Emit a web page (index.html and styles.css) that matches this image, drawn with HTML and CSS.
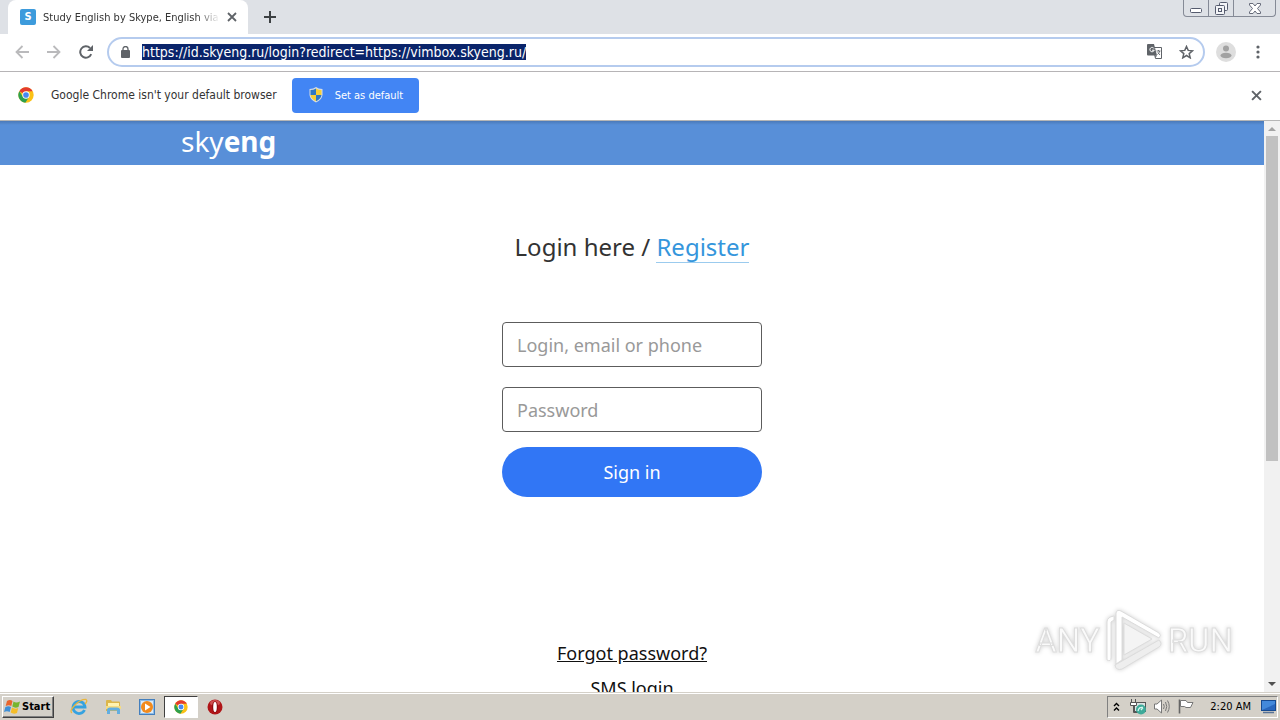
FILE: index.html
```html
<!DOCTYPE html>
<html lang="en">
<head>
    <meta charset="UTF-8">
    <meta name="viewport" content="width=device-width, initial-scale=1.0">
    <title>Study English by Skype, English via Skype</title>
    <link rel="stylesheet" href="styles.css">
</head>
<body>
    <!-- Shared icons -->
    <svg class="sprite" aria-hidden="true">
        <symbol id="chrome" viewBox="0 0 48 48">
            <circle cx="24" cy="24" r="23" fill="#fbc116"/>
            <path d="M24 24 4.100 12.500A23 23 0 0 1 43.900 12.500L24 13Z" fill="#e33b2e"/>
            <path d="M4.100 12.500A23 23 0 0 0 22 47L33.500 29.500 24 34 14.500 29.500Z" fill="#2da04e"/>
            <circle cx="24" cy="24" r="11" fill="#fff"/>
            <circle cx="24" cy="24" r="8.500" fill="#4688f1"/>
        </symbol>
        <symbol id="cross" viewBox="0 0 10 10">
            <path d="M1 1 9 9M9 1 1 9" fill="none" stroke="currentColor" stroke-width="1.800"/>
        </symbol>
    </svg>

    <div class="desktop">
        <!-- Tab strip -->
        <div class="tab-strip">
            <div class="tab">
                <span class="favicon">S</span>
                <span class="tab-title">Study English by Skype, English via S</span>
                <button class="icon-btn" aria-label="Close tab"><svg width="10" height="10"><use href="#cross"/></svg></button>
            </div>
            <button class="icon-btn new-tab" aria-label="New tab">
                <svg width="12" height="12" viewBox="0 0 12 12"><path d="M6 0V12M0 6H12" stroke="#3c4043" stroke-width="2"/></svg>
            </button>
            <div class="window-controls">
                <button class="window-btn" aria-label="Minimize">
                    <svg width="12" height="5" viewBox="0 0 12 5"><rect x=".5" y=".5" width="11" height="4" rx="1" fill="#fff" stroke="#555b6e"/></svg>
                </button>
                <button class="window-btn" aria-label="Restore">
                    <svg width="13" height="13" viewBox="0 0 13 13" fill="#f3f4f7" stroke="#555b6e"><rect x="4.500" y=".5" width="8" height="8" rx="1"/><rect x=".5" y="3.500" width="9" height="9" rx="1"/><rect x="3.500" y="6.500" width="3" height="3"/></svg>
                </button>
                <button class="window-btn window-close" aria-label="Close">
                    <svg width="12" height="11" viewBox="0 0 12 11"><path d="M.5.5H4L6 3 8 .5H11.500V2L8.500 5.500 11.500 9V10.500H8L6 8 4 10.500H.5V9L3.500 5.500.5 2Z" fill="#fff" stroke="#666b7a"/></svg>
                </button>
            </div>
        </div>

        <!-- Toolbar -->
        <div class="toolbar">
            <button class="icon-btn nav-btn disabled" aria-label="Back">
                <svg width="14" height="14" viewBox="0 0 14 14" fill="none" stroke="currentColor" stroke-width="1.800"><path d="M14 7H1.500M7.500 1 1.500 7 7.500 13"/></svg>
            </button>
            <button class="icon-btn nav-btn disabled" aria-label="Forward">
                <svg width="14" height="14" viewBox="0 0 14 14" fill="none" stroke="currentColor" stroke-width="1.800"><path d="M0 7H12.500M6.500 1 12.500 7 6.500 13"/></svg>
            </button>
            <button class="icon-btn nav-btn" aria-label="Reload">
                <svg width="14" height="14" viewBox="0 0 14 14"><path d="M12.200 9.200A5.700 5.700 0 1 1 11 3" fill="none" stroke="currentColor" stroke-width="2"/><path d="M14 0V6H8Z" fill="currentColor"/></svg>
            </button>
            <div class="address-bar">
                <svg class="lock" width="9" height="12" viewBox="0 0 9 12"><rect y="4" width="9" height="8" rx="1" fill="#5f6368"/><path d="M2 5V3a2.500 2.500 0 0 1 5 0V5" fill="none" stroke="#5f6368" stroke-width="1.300"/></svg>
                <input class="address-input" id="address" type="text" aria-label="Address" spellcheck="false" value="https://id.skyeng.ru/login?redirect=https://vimbox.skyeng.ru/">
                <button class="icon-btn" aria-label="Translate this page">
                    <svg width="15" height="15" viewBox="0 0 15 15"><path d="M6 3.500H14.500V14.500H8.500Z" fill="#fff" stroke="#5f6368"/><path d="M1 0H7L10 11.500H1Q0 11.500 0 10.500V1Q0 0 1 0Z" fill="#5f6368"/><path d="M7 4.500A2.200 2.200 0 1 0 7.200 6.200H5" fill="none" stroke="#fff"/><path d="M9.500 7H13.500M11.500 6V7M12.700 7Q12 9.500 10.500 10.500M10.800 8.500 13 11" fill="none" stroke="#5f6368" stroke-width=".9"/><path d="M8 11.500H10L8.500 14Z" fill="#5f6368"/></svg>
                </button>
                <button class="icon-btn star" aria-label="Bookmark this page">
                    <svg width="15" height="14" viewBox="0 0 15 14"><path d="M7.500 1.500 9.200 5.400 13.500 5.800 10.200 8.600 11.200 12.800 7.500 10.500 3.800 12.800 4.800 8.600 1.500 5.800 5.800 5.400Z" fill="none" stroke="#5f6368" stroke-width="1.500"/></svg>
                </button>
            </div>
            <button class="icon-btn avatar" aria-label="Profile">
                <svg width="20" height="20" viewBox="0 0 20 20"><circle cx="10" cy="10" r="10" fill="#dedede"/><circle cx="10" cy="6.500" r="3" fill="#a2a2a2"/><ellipse cx="10" cy="13.500" rx="5.500" ry="2.800" fill="#a2a2a2"/></svg>
            </button>
            <button class="icon-btn" aria-label="Menu">
                <svg width="4" height="14" viewBox="0 0 4 14" fill="#5f6368"><circle cx="2" cy="2" r="1.600"/><circle cx="2" cy="7" r="1.600"/><circle cx="2" cy="12" r="1.600"/></svg>
            </button>
        </div>

        <!-- Default browser notice -->
        <div class="infobar">
            <svg width="16" height="16"><use href="#chrome"/></svg>
            <span class="infobar-text">Google Chrome isn't your default browser</span>
            <button class="default-btn">
                <svg width="14" height="16" viewBox="0 0 14 16"><path d="M7 0Q9.500 2 13.500 2V8Q13 13 7 15.500 1 13 .5 8V2Q4.500 2 7 0Z" fill="#d5dce4"/><path d="M7 1.500V8H1.500V3Q4.500 3 7 1.500ZM7 8H12.500Q12 12 7 14.300Z" fill="#2f78c4"/><path d="M7 1.500Q9.500 3 12.500 3V8H7ZM1.500 8H7V14.300Q2 12 1.500 8Z" fill="#f7cf36"/></svg>
                Set as default
            </button>
            <button class="icon-btn infobar-close" aria-label="Close"><svg width="11" height="11"><use href="#cross"/></svg></button>
        </div>

        <!-- Web page -->
        <div class="viewport">
            <div class="page">
                <header class="header">
                    <div class="container">
                        <a href="#" class="logo">sky<b>eng</b></a>
                    </div>
                </header>
                <main class="login">
                    <h1 class="login-title">Login here / <a href="#" class="register-link">Register</a></h1>
                    <form class="login-form">
                        <input class="field" type="text" aria-label="Login, email or phone" placeholder="Login, email or phone">
                        <input class="field" type="password" aria-label="Password" placeholder="Password">
                        <button class="sign-in" type="button">Sign in</button>
                    </form>
                    <div class="login-links">
                        <a href="#" class="forgot-link">Forgot password?</a>
                        <a href="#" class="sms-link">SMS login</a>
                    </div>
                </main>
            </div>
            <div class="scrollbar">
                <svg width="8" height="4" viewBox="0 0 8 4"><path d="M0 4 4 0 8 4Z" fill="#a3a3a3"/></svg>
                <div class="scroll-track"><div class="scroll-thumb"></div></div>
                <svg width="8" height="4" viewBox="0 0 8 4"><path d="M0 0 4 4 8 0Z" fill="#505050"/></svg>
            </div>
            <div class="watermark">
                <span>ANY</span>
                <svg width="58" height="64" viewBox="0 0 58 64" fill="#fff" stroke="#dcdcdc" stroke-linejoin="round">
                    <path d="M2 14Q2 9 9 8V12L6 14V50Q6 54 2 52Z"/>
                    <path d="M11 5Q12 1 16 3L54 25Q57 27 54 30L17 9V52L11 56Z"/>
                    <path d="M19 15 47 31 19 47Z" fill="#f4f4f4"/>
                    <path d="M10 57 54 32Q58 36 54 39L17 61Q11 63 10 57Z" fill="#eeeeee"/>
                </svg>
                <span>RUN</span>
            </div>
        </div>

        <!-- Taskbar -->
        <div class="taskbar">
            <button class="start-btn">
                <svg width="17" height="16" viewBox="0 0 17 16"><path d="M3 2Q6 0 8.500 2L7.300 7Q5 5.500 1.700 7Z" fill="#e9652c"/><path d="M9.500 2.500Q12 4.500 16 2.500L14.500 8Q11 9.500 8.300 7.500Z" fill="#77b52f"/><path d="M1.400 8Q4.500 6.500 7 8L5.700 13Q3 11.500 0 13Z" fill="#3f8fd6"/><path d="M8 8.500Q11 10.500 14.200 9L13 14Q9.500 15.500 6.700 13.500Z" fill="#f5bd28"/></svg>
                Start
            </button>
            <div class="quick-launch">
                <button class="task-btn" aria-label="Internet Explorer">
                    <svg width="18" height="18" viewBox="0 0 18 18" fill="none"><path d="M14.500 12A6 6 0 1 1 15 9H4" stroke="#35a2e0" stroke-width="2.800"/><path d="M2 15Q-1 13 5 7T16 1.500Q18 3 15 6" stroke="#e9b63c" stroke-width="1.300"/></svg>
                </button>
                <button class="task-btn" aria-label="Explorer">
                    <svg width="17" height="16" viewBox="0 0 17 16"><path d="M1 2Q1 1 2 1H6L7 2.500H14Q15 2.500 15 3.500V12H1Z" fill="#dcb64a"/><path d="M3 4H14V8H3Z" fill="#fff3b0"/><path d="M1 7H16V10H1Z" fill="#f5dc82"/><path d="M2 15V11Q2 8.500 5 8.500H12Q15 8.500 15 11V15H12V11.500H5V15Z" fill="#62aee0"/></svg>
                </button>
                <button class="task-btn" aria-label="Media Player">
                    <svg width="16" height="16" viewBox="0 0 16 16"><rect x=".5" y=".5" width="15" height="15" fill="#8dbce8" stroke="#447fbd"/><rect x="2" y="2" width="12" height="12" fill="#dcebf8"/><circle cx="8" cy="8" r="6" fill="#f28a1c"/><path d="M6 4.500 11.500 8 6 11.500Z" fill="#fff"/></svg>
                </button>
                <button class="task-btn active" aria-label="Chrome"><svg width="14" height="14"><use href="#chrome"/></svg></button>
                <button class="task-btn" aria-label="Opera">
                    <svg width="16" height="16" viewBox="0 0 16 16"><circle cx="8" cy="8" r="7.500" fill="#b01518"/><ellipse cx="8" cy="4" rx="5" ry="3" fill="#cf5050"/><ellipse cx="8" cy="8" rx="3" ry="5.800" fill="#8a0c10"/><ellipse cx="8" cy="8" rx="1.800" ry="5" fill="#fff"/></svg>
                </button>
            </div>
            <div class="tray">
                <svg width="7" height="10" viewBox="0 0 7 10" fill="none" stroke="#000" stroke-width="1.400"><path d="M1 4 3.500 1.500 6 4M1 8.500 3.500 6 6 8.500"/></svg>
                <svg class="tray-network" width="17" height="16" viewBox="0 0 17 16"><rect x="4.500" y="3.500" width="11" height="9" fill="#dce4e4" stroke="#555"/><path d="M1.500 0V4M5.500 0V4M3.500 6V13.500H8" fill="none" stroke="#555"/><path d="M.5 3.500H6.500V6.500H.5Z" fill="#fff" stroke="#555"/><circle cx="11" cy="10.500" r="5" fill="#3eaa99"/><path d="M8 12Q9 7.500 13 8.500M13 8.500 11 11" fill="none" stroke="#d7f5ef" stroke-width="1.300"/></svg>
                <svg width="16" height="15" viewBox="0 0 16 15"><path d="M.5 5H3L7.500 1V14L3 10H.5Z" fill="#fff" stroke="#777"/><path d="M9.500 5Q11 7.500 9.500 10M11.500 3Q14 7.500 11.500 12M13.500 1.500Q17 7.500 13.500 13.500" fill="none" stroke="#777"/></svg>
                <svg class="tray-flag" width="16" height="15" viewBox="0 0 16 15"><path d="M1.500.5V14.500" stroke="#666" stroke-width="1.600"/><path d="M2.500 1.500H8L9.500 3.500H15L12.500 8.500H8L6.500 7.500H2.500Z" fill="#fff" stroke="#777"/></svg>
                <span class="clock">2:20 AM</span>
                <svg width="15" height="14" viewBox="0 0 15 14"><rect x=".5" y=".5" width="14" height="10" fill="#2866bd" stroke="#164a91"/><path d="M1 10 14 4V1H1Z" fill="#4389db"/><path d="M2 12.500H13" stroke="#587397" stroke-width="1.500"/></svg>
            </div>
        </div>
    </div>

    <script>
        // Address is highlighted as soon as the window opens
        const address = document.getElementById('address');
        address.focus();
        address.select();
    </script>
</body>
</html>
```
FILE: styles.css
```css
/* Reset and base styles */
* {
    margin: 0;
    padding: 0;
    box-sizing: border-box;
}

body {
    background-color: #ffffff;
    font-family: 'DejaVu Sans Condensed', 'DejaVu Sans', sans-serif;
    font-size: 11px;
    color: #333;
    overflow: hidden;
}

button,
input {
    font: inherit;
    color: inherit;
    border: none;
    background: none;
    outline: none;
}

svg {
    display: block;
    flex-shrink: 0;
}

.sprite {
    position: absolute;
    width: 0;
    height: 0;
}

.desktop {
    display: flex;
    flex-direction: column;
    height: 100vh;
}

.icon-btn {
    display: flex;
    align-items: center;
    justify-content: center;
    flex-shrink: 0;
    color: #5f6368;
}

/* Tab strip */
.tab-strip {
    display: flex;
    flex-shrink: 0;
    height: 34px;
    padding-left: 8px;
    background-color: #dee1e6;
}

.tab {
    display: flex;
    align-items: center;
    width: 240px;
    padding: 0 12px;
    background-color: #fff;
    border-radius: 8px 8px 0 0;
}

.favicon {
    width: 16px;
    height: 16px;
    flex-shrink: 0;
    margin-right: 7px;
    border-radius: 2px;
    background-color: #3d9bdc;
    color: #fff;
    font-weight: bold;
    line-height: 16px;
    text-align: center;
}

.tab-title {
    flex: 1;
    overflow: hidden;
    white-space: nowrap;
    -webkit-mask-image: linear-gradient(to left, transparent, #000 24px);
    mask-image: linear-gradient(to left, transparent, #000 24px);
}

.tab .icon-btn {
    width: 24px;
    height: 16px;
    margin-right: -8px;
}

.new-tab {
    width: 44px;
}

.window-controls {
    display: flex;
    height: 17px;
    margin-left: auto;
    margin-right: 4px;
    border: 1px solid #858a96;
    border-top: none;
    border-radius: 0 0 4px 4px;
}

.window-btn {
    display: flex;
    align-items: center;
    justify-content: center;
    width: 25px;
    border-right: 1px solid #858a96;
}

.window-btn:first-child {
    align-items: flex-end;
    padding-bottom: 3px;
}

.window-close {
    width: 41px;
    border-right: none;
}

/* Toolbar */
.toolbar {
    display: flex;
    align-items: center;
    flex-shrink: 0;
    height: 38px;
    padding: 0 20px 2px 6px;
    border-bottom: 1px solid #b6b4b6;
}

.nav-btn {
    width: 32px;
    height: 28px;
}

.disabled {
    color: #bababc;
}

.address-bar {
    display: flex;
    align-items: center;
    flex: 1;
    height: 30px;
    margin-left: 5px;
    padding: 0 9px 0 12px;
    border: 2px solid #b5cbee;
    border-radius: 15px;
}

.address-input {
    flex: 1;
    height: 18px;
    margin-left: 12px;
    font-size: 14px;
}

.address-input::selection {
    background-color: #0a246a;
    color: #fff;
}

.star {
    margin-left: 17px;
}

.avatar {
    margin: 0 20px 0 11px;
}

/* Infobar */
.infobar {
    display: flex;
    align-items: center;
    flex-shrink: 0;
    height: 49px;
    padding: 0 18px 2px;
    border-bottom: 1px solid #b6b6b6;
}

.infobar-text {
    margin: 0 15px 0 17px;
    font-size: 12px;
}

.default-btn {
    display: flex;
    align-items: center;
    gap: 12px;
    height: 35px;
    padding: 0 16px 0 17px;
    border-radius: 4px;
    background-color: #4285f4;
    color: #fff;
}

.infobar-close {
    margin-left: auto;
}

/* Web page */
.viewport {
    position: relative;
    display: flex;
    flex: 1;
    min-height: 0;
}

.page {
    flex: 1;
    overflow: hidden;
    font-family: 'Noto Sans', sans-serif;
    font-size: 18px;
}

.header {
    height: 44px;
    background: linear-gradient(#4b79b8, #588fd8 4px);
}

.container {
    max-width: 902px;
    margin: 0 auto;
}

.logo {
    color: #fff;
    font-size: 28px;
    line-height: 40px;
    text-decoration: none;
}

.login {
    display: flex;
    flex-direction: column;
    align-items: center;
    padding-top: 64px;
}

.login-title {
    font-size: 24px;
    font-weight: normal;
    line-height: 36px;
}

.register-link {
    display: inline-block;
    border-bottom: 1px solid #9bcbee;
    color: #3596dc;
    line-height: 30px;
    text-decoration: none;
}

.login-form {
    display: flex;
    flex-direction: column;
    width: 260px;
    margin-top: 57px;
}

.field {
    height: 45px;
    margin-bottom: 20px;
    padding: 0 14px;
    border: 1px solid #5c5c5c;
    border-radius: 4px;
}

.field::placeholder {
    color: #999;
}

.sign-in {
    height: 50px;
    margin-top: -5px;
    border-radius: 25px;
    background-color: #3176f5;
    color: #fff;
}

.login-links {
    display: flex;
    flex-direction: column;
    align-items: center;
    gap: 11px;
    margin-top: 144px;
    line-height: 24px;
}

.forgot-link {
    color: #111;
}

.sms-link {
    color: #111;
    text-decoration: none;
}

/* Scrollbar */
.scrollbar {
    display: flex;
    flex-direction: column;
    align-items: center;
    width: 16px;
    padding: 6px 2px;
    background-color: #f1f1f1;
}

.scroll-track {
    flex: 1;
    width: 100%;
    padding: 5px 0;
}

.scroll-thumb {
    height: 60%;
    background-color: #c1c1c1;
}

/* Watermark */
.watermark {
    position: absolute;
    right: 47px;
    bottom: 20px;
    display: flex;
    align-items: center;
    gap: 5px;
    color: #fafafa;
    font-family: 'Liberation Sans Narrow', Roboto, sans-serif;
    font-size: 33px;
    -webkit-text-stroke: 1px #dedede;
    filter: drop-shadow(0 0 2px #d0d0d0);
}

/* Taskbar */
.taskbar {
    display: flex;
    align-items: center;
    flex-shrink: 0;
    height: 28px;
    padding: 0 2px;
    border-top: 1px solid #d4d0c8;
    background-color: #d4d0c8;
    box-shadow: inset 0 1px #fff;
    color: #000;
}

.start-btn {
    display: flex;
    align-items: center;
    gap: 1px;
    width: 52px;
    height: 22px;
    padding: 0 1px;
    border: 1px solid;
    border-color: #fff #404040 #404040 #fff;
    box-shadow: inset -1px -1px #808080;
    font-weight: bold;
}

.quick-launch {
    display: flex;
    margin-left: 8px;
}

.task-btn {
    display: flex;
    align-items: center;
    justify-content: center;
    width: 34px;
    height: 22px;
}

.active {
    border: 1px solid;
    border-color: #404040 #fff #fff #404040;
    background-color: #fff;
}

.tray {
    display: flex;
    align-items: center;
    height: 22px;
    margin-left: auto;
    padding: 0 1px 0 5px;
    border: 1px solid;
    border-color: #808080 #fff #fff #808080;
}

.tray-network {
    margin: 0 7px 0 10px;
}

.tray-flag {
    margin-left: 8px;
}

.clock {
    margin: 0 10px 0 16px;
}
```
